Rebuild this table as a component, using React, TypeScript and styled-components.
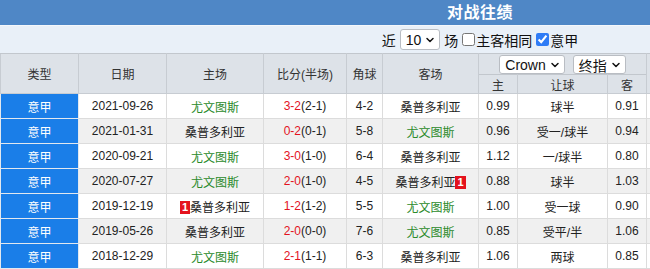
import styled, { createGlobalStyle } from "styled-components";
import { ChevronDown } from "lucide-react";

const GlobalStyle = createGlobalStyle`
  html, body {
    margin: 0;
    padding: 0;
    overflow: hidden;
    background: #fff;
  }
  body {
    font-family: "Liberation Sans", Arial, "Noto Sans CJK SC", sans-serif;
    color: #222;
  }
`;

const Panel = styled.div`
  width: 960px;
`;

const TitleBar = styled.div`
  height: 25px;
  line-height: 25px;
  background-color: #4f87c6;
  color: #fff;
  font-size: 16px;
  font-weight: bold;
  text-align: center;
  letter-spacing: 0.5px;
`;

const FilterBar = styled.div`
  height: 27px;
  background-color: #e9f0f8;
  border-top: 1px solid #f4f7fb;
  display: flex;
  align-items: center;
  justify-content: center;
  gap: 4px;
  font-size: 14px;
  color: #111;
`;

const FilterLabel = styled.label`
  display: flex;
  align-items: center;
`;

const Check = styled.input`
  margin: 0 1px 0 0;
  width: 13px;
  height: 13px;
  accent-color: #2f7cf6;
`;

const FakeSelect = styled.span<{ $h: number }>`
  display: inline-flex;
  align-items: center;
  gap: 3px;
  height: ${(p) => p.$h}px;
  padding: 0 3px 0 5px;
  background: #fff;
  border: 1px solid #b9bdc3;
  border-radius: 3px;
  font-size: 14px;
  color: #111;
  box-sizing: border-box;
`;

const Table = styled.table`
  width: 960px;
  table-layout: fixed;
  border-collapse: collapse;
  font-size: 12px;
`;

const Th = styled.th`
  background-color: #dde2e8;
  border: 1px solid #c7ccd2;
  border-top-color: #c2c7cd;
  font-weight: normal;
  color: #333;
  padding: 0;
  height: 18px;
  text-align: center;
`;

const SelectTh = styled(Th)`
  border-bottom: none;
`;

const SelectGroup = styled.div`
  display: flex;
  justify-content: center;
  gap: 8px;
  margin-top: 1px;
`;

const Row = styled.tr<{ $alt: boolean }>`
  background-color: ${(p) => (p.$alt ? "#f0f0f0" : "#fff")};
`;

const Td = styled.td`
  height: 24px;
  padding: 0;
  text-align: center;
  border: 1px solid #dcdcdc;
  white-space: nowrap;
`;

const TypeTd = styled(Td)`
  background-color: #1a7ee8;
  color: #fff;
  border-color: #e2e8ef;
`;

const Team = styled.span<{ $home: boolean }>`
  color: ${(p) => (p.$home ? "#2a8a2a" : "#222")};
`;

const RedCard = styled.span`
  display: inline-block;
  background-color: #e4121d;
  color: #fff;
  font-weight: bold;
  font-size: 11px;
  line-height: 13px;
  padding: 0 2px;
  vertical-align: 1px;
`;

const Goals = styled.span`
  color: #e3131f;
`;

type Match = {
  date: string;
  home: string;
  away: string;
  ft: string;
  ht: string;
  corner: string;
  h: string;
  line: string;
  a: string;
  homeCard?: number;
  awayCard?: number;
};

const JUV = "尤文图斯";
const SAM = "桑普多利亚";

const matches: Match[] = [
  { date: "2021-09-26", home: JUV, away: SAM, ft: "3-2", ht: "(2-1)", corner: "4-2", h: "0.99", line: "球半", a: "0.91" },
  { date: "2021-01-31", home: SAM, away: JUV, ft: "0-2", ht: "(0-1)", corner: "5-8", h: "0.96", line: "受一/球半", a: "0.94" },
  { date: "2020-09-21", home: JUV, away: SAM, ft: "3-0", ht: "(1-0)", corner: "6-4", h: "1.12", line: "一/球半", a: "0.80" },
  { date: "2020-07-27", home: JUV, away: SAM, ft: "2-0", ht: "(1-0)", corner: "4-5", h: "0.88", line: "球半", a: "1.03", awayCard: 1 },
  { date: "2019-12-19", home: SAM, away: JUV, ft: "1-2", ht: "(1-2)", corner: "5-5", h: "1.00", line: "受一球", a: "0.90", homeCard: 1 },
  { date: "2019-05-26", home: SAM, away: JUV, ft: "2-0", ht: "(0-0)", corner: "7-6", h: "0.85", line: "受平/半", a: "1.06" },
  { date: "2018-12-29", home: JUV, away: SAM, ft: "2-1", ht: "(1-1)", corner: "6-3", h: "1.06", line: "两球", a: "0.85" },
];

// last column: rest of the table, outside the visible frame
const widths = [78, 88, 97, 83, 36, 96, 39, 90, 39, 314];

export default function App() {
  return (
    <Panel>
      <GlobalStyle />
      <TitleBar>对战往绩</TitleBar>
      <FilterBar>
        <span>近</span>
        <FakeSelect $h={21}>
          10 <ChevronDown size={12} strokeWidth={3} />
        </FakeSelect>
        <span>场</span>
        <FilterLabel>
          <Check type="checkbox" />
          主客相同
        </FilterLabel>
        <FilterLabel>
          <Check type="checkbox" defaultChecked />
          意甲
        </FilterLabel>
      </FilterBar>
      <Table>
        <colgroup>
          {widths.map((w, i) => (
            <col key={i} style={{ width: w }} />
          ))}
        </colgroup>
        <thead>
          <tr>
            <Th rowSpan={2}>类型</Th>
            <Th rowSpan={2}>日期</Th>
            <Th rowSpan={2}>主场</Th>
            <Th rowSpan={2}>比分(半场)</Th>
            <Th rowSpan={2}>角球</Th>
            <Th rowSpan={2}>客场</Th>
            <SelectTh colSpan={3}>
              <SelectGroup>
                <FakeSelect $h={19}>
                  Crown <ChevronDown size={12} strokeWidth={3} />
                </FakeSelect>
                <FakeSelect $h={19}>
                  终指 <ChevronDown size={12} strokeWidth={3} />
                </FakeSelect>
              </SelectGroup>
            </SelectTh>
            <Th rowSpan={2} />
          </tr>
          <tr>
            <Th>主</Th>
            <Th>让球</Th>
            <Th>客</Th>
          </tr>
        </thead>
        <tbody>
          {matches.map((m, i) => (
            <Row key={m.date} $alt={i % 2 === 1}>
              <TypeTd>意甲</TypeTd>
              <Td>{m.date}</Td>
              <Td>
                {m.homeCard ? <RedCard>{m.homeCard}</RedCard> : null}
                <Team $home={m.home === JUV}>{m.home}</Team>
              </Td>
              <Td>
                <Goals>{m.ft}</Goals>
                {m.ht}
              </Td>
              <Td>{m.corner}</Td>
              <Td>
                <Team $home={m.away === JUV}>{m.away}</Team>
                {m.awayCard ? <RedCard>{m.awayCard}</RedCard> : null}
              </Td>
              <Td>{m.h}</Td>
              <Td>{m.line}</Td>
              <Td>{m.a}</Td>
              <Td />
            </Row>
          ))}
        </tbody>
      </Table>
    </Panel>
  );
}
